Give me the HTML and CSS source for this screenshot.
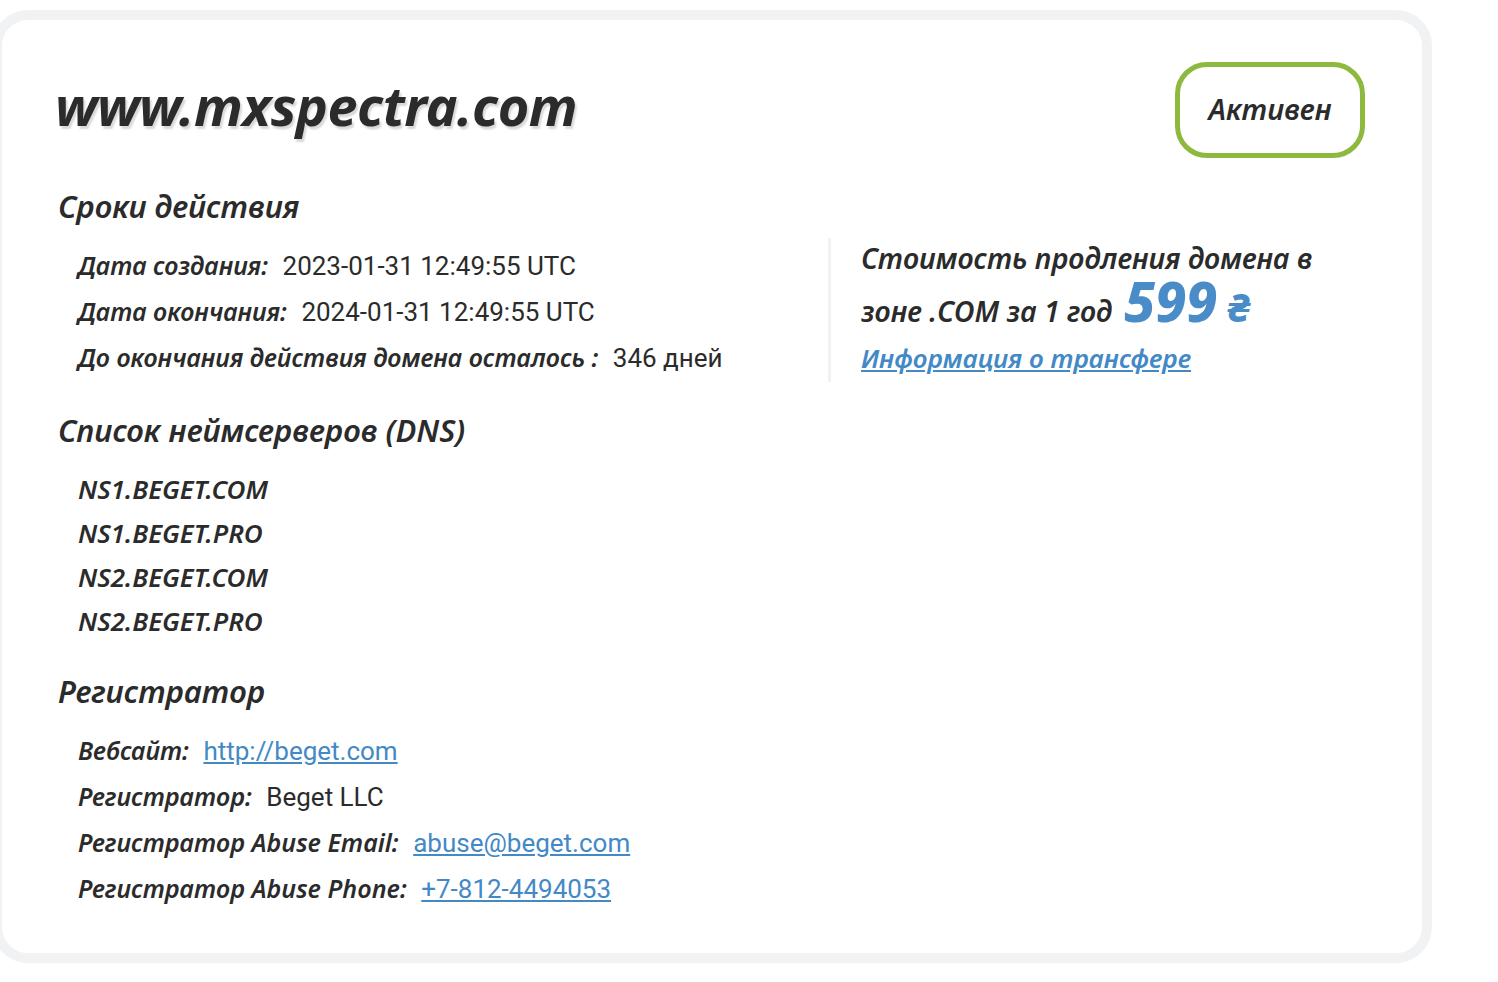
FILE: index.html
```html
<!DOCTYPE HTML>
<html>
<head>
<meta charset="utf-8">
<title>www.mxspectra.com</title>
<link rel="stylesheet" href="styles.css">
</head>

<body>
<div class="card">
	<div class="head">
		<h1 class="domain">www.mxspectra.com</h1>
		<span class="status">Активен</span>
	</div>

	<h2 class="sect">Сроки действия</h2>
	<div class="terms">
		<ul class="rows">
			<li><b>Дата создания:</b> 2023-01-31 12:49:55 UTC</li>
			<li><b>Дата окончания:</b> 2024-01-31 12:49:55 UTC</li>
			<li><b>До окончания действия домена осталось :</b> 346 дней</li>
		</ul>
		<div class="price">
			<p>Стоимость продления домена в зоне .COM за 1 год<span class="sum">599</span><span class="cur">₴</span></p>
			<a href="javascript:;">Информация о трансфере</a>
		</div>
	</div>

	<h2 class="sect">Список неймсерверов (DNS)</h2>
	<ul class="ns">
		<li>NS1.BEGET.COM</li>
		<li>NS1.BEGET.PRO</li>
		<li>NS2.BEGET.COM</li>
		<li>NS2.BEGET.PRO</li>
	</ul>

	<h2 class="sect">Регистратор</h2>
	<ul class="rows">
		<li><b>Вебсайт:</b> <a href="javascript:;">http://beget.com</a></li>
		<li><b>Регистратор:</b> Beget LLC</li>
		<li><b>Регистратор Abuse Email:</b> <a href="javascript:;">abuse@beget.com</a></li>
		<li><b>Регистратор Abuse Phone:</b> <a href="javascript:;">+7-812-4494053</a></li>
	</ul>
</div>
</body>
</html>
```

FILE: styles.css
```css
* {margin:0; padding:0; box-sizing:border-box;}
li {list-style:none;}
body {
	background:#fff;
	color:#2b2b2b;
	font-family:"Noto Sans", sans-serif;
}
a {color:#4389c6;}

.card {
	width:1440px;
	margin:10px 0 0 -8px;
	border:10px solid #f1f2f4;
	border-radius:36px;
	padding:42px 57px 41px 56px;
}
.head {
	display:flex;
	justify-content:space-between;
	align-items:flex-start;
	height:96px;
}
.domain {
	font-size:54px;
	font-style:italic;
	font-weight:700;
	letter-spacing:-0.5px;
	line-height:60px;
	margin:13px 0 0 -3px;
	text-shadow:2px 3px 2px #d9d9d9;
}
.status {
	width:190px;
	height:96px;
	border:5px solid #8db93f;
	border-radius:32px;
	display:flex;
	align-items:center;
	justify-content:center;
	padding-bottom:3px;
	font-size:29px;
	font-style:italic;
	font-weight:600;
}

.sect {
	font-size:31px;
	font-style:italic;
	font-weight:600;
	line-height:40px;
	margin:28px 0 17px;
}
.rows {padding-left:20px;}
.rows li {
	font-family:Roboto, sans-serif;
	font-size:26px;
	line-height:46px;
	height:46px;
	white-space:nowrap;
}
.rows b {
	font-family:"Noto Sans", sans-serif;
	font-style:italic;
	font-weight:600;
	font-size:25px;
	line-height:1;
	margin-right:8px;
}

.terms {display:flex; align-items:flex-start;}
.terms .rows {width:770px; flex:none;}
.price {
	border-left:3px solid #f1f2f4;
	padding:0 0 2px 30px;
	margin-top:-5px;
	width:510px;
	font-style:italic;
	font-weight:600;
	font-size:28.5px;
}
.price p {line-height:53px; margin-top:-6px;}
.price .sum, .price .cur {
	color:#4a8cc8;
	font-weight:800;
	line-height:0;
}
.price .sum {font-size:55px; margin-left:12px;}
.price .cur {font-size:40px; margin-left:10px;}
.price a {display:inline-block; margin-top:-3px; font-size:26px; line-height:44px;}

.ns {padding-left:20px;}
.ns li {
	font-size:26px;
	font-style:italic;
	font-weight:600;
	line-height:44px;
}
```
